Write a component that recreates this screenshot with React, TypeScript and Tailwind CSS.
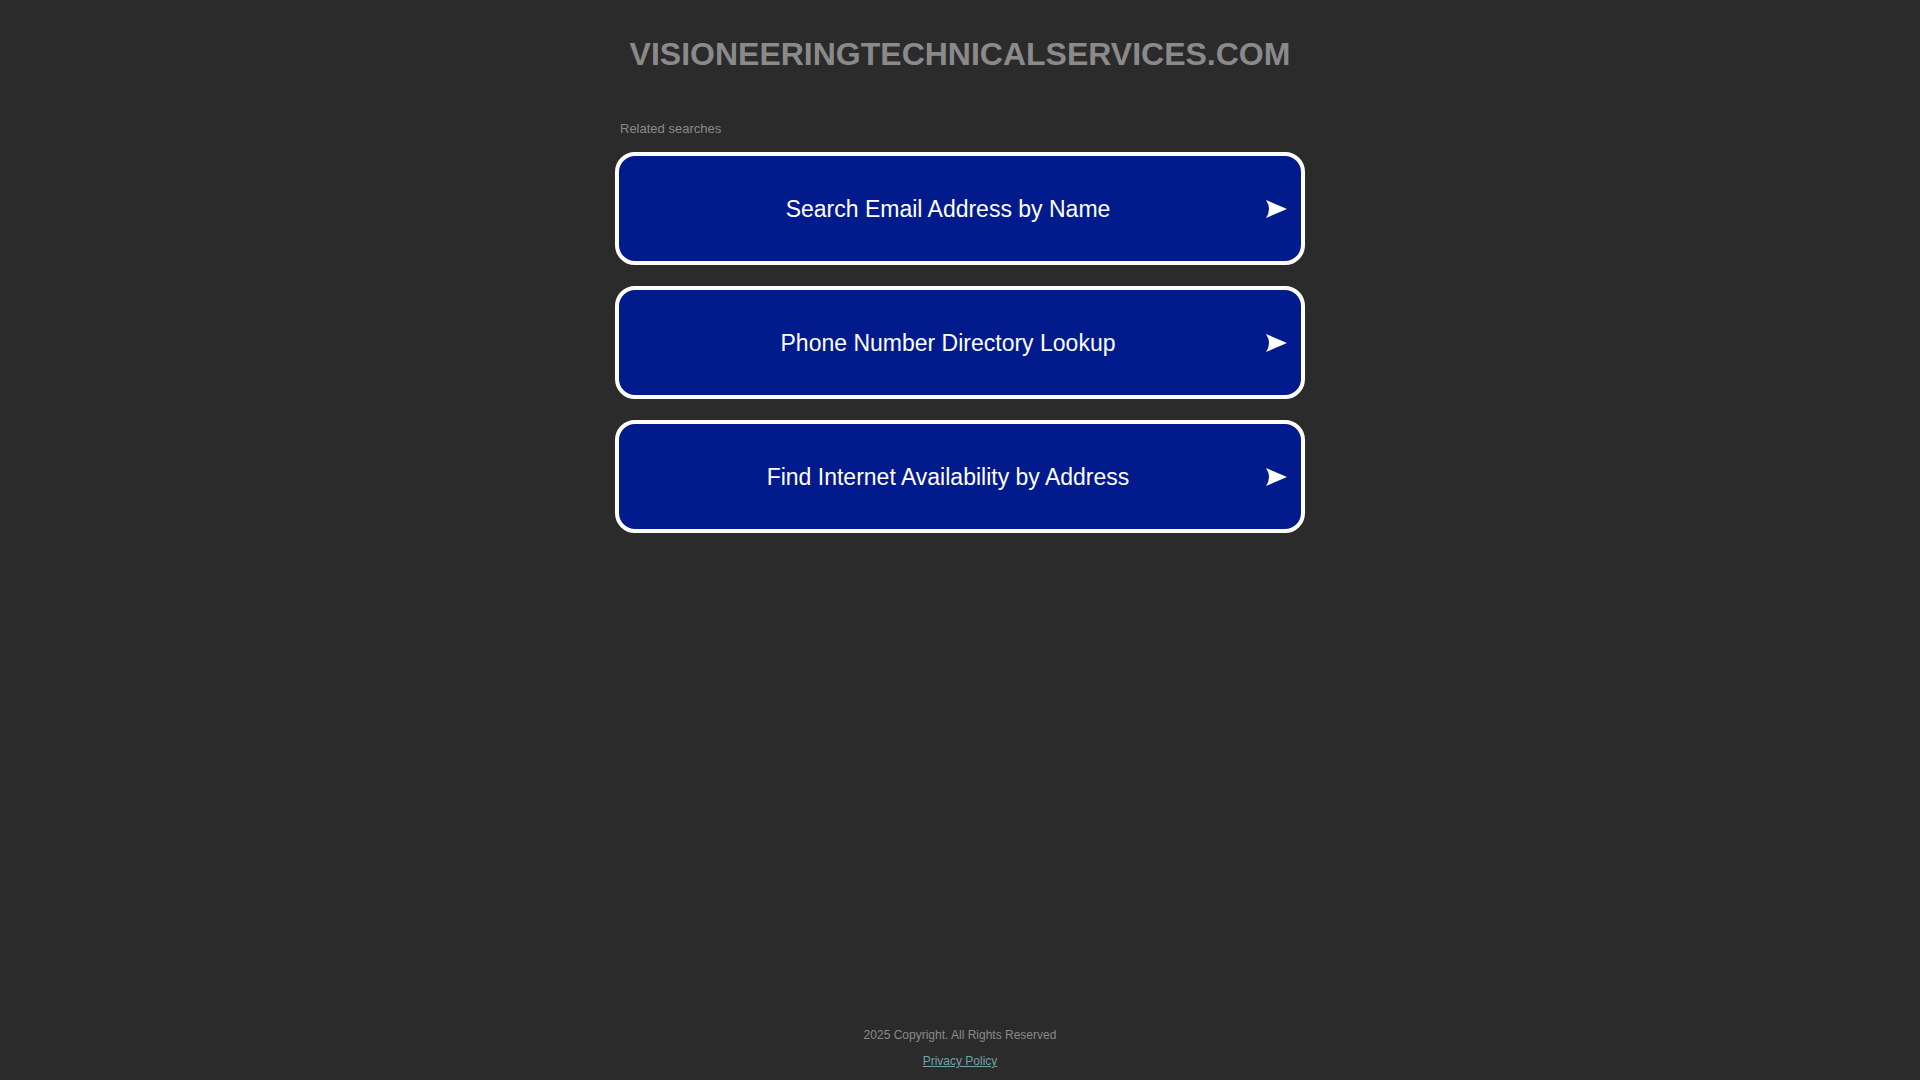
import React from 'react'

const searches = [
  'Search Email Address by Name',
  'Phone Number Directory Lookup',
  'Find Internet Availability by Address',
]

function Arrow() {
  return (
    <svg width="21" height="18" viewBox="0 0 21 18" className="shrink-0">
      <path d="M0 0 L21 9 L0 18 Q6 9 0 0 Z" fill="#ffffff" />
    </svg>
  )
}

export default function App() {
  return (
    <div
      className="min-h-screen flex flex-col bg-[#2b2b2b]"
      style={{ fontFamily: '"Liberation Sans", Arial, sans-serif' }}
    >
      {/* HEADER */}
      <h1 className="mt-[36px] text-center text-[32px] leading-[36px] font-bold text-[#8a8a8a]">
        VISIONEERINGTECHNICALSERVICES.COM
      </h1>

      {/* RELATED */}
      <div className="w-[690px] mx-auto mt-[49px]">
        <p className="pl-[5px] text-[13px] leading-[16px] text-[#8a8a8a]">Related searches</p>

        <div className="mt-[15px] flex flex-col gap-[21px]">
          {searches.map(s => (
            <a
              key={s}
              href="#"
              className="h-[113px] flex items-center pl-[11px] pr-[14px] rounded-[20px] border-4 border-white bg-[#011a8c] text-white"
            >
              <span className="flex-1 text-center text-[23px] leading-[28px]">{s}</span>
              <Arrow />
            </a>
          ))}
        </div>
      </div>

      {/* FOOTER */}
      <footer className="mt-auto pb-[12px] flex flex-col items-center text-[12px] leading-[14px]">
        <p className="text-[#8a8a8a]">2025 Copyright. All Rights Reserved</p>
        <a href="#" className="mt-[12px] underline text-[#6ea3a8]">Privacy Policy</a>
      </footer>
    </div>
  )
}
